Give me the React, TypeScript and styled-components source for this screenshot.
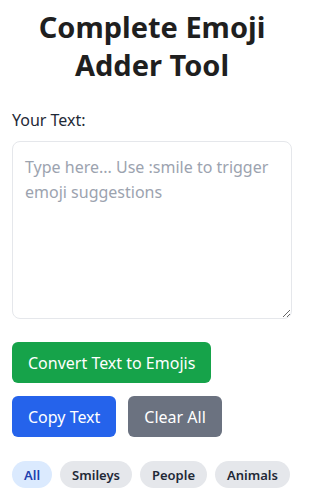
import React, { useState } from 'react';
import styled, { createGlobalStyle } from 'styled-components';

// ─── Global ───────────────────────────────────────────────────────────────────
const GlobalStyle = createGlobalStyle`
  html, body {
    margin: 0;
    padding: 0;
    background: #ffffff;
  }
  body {
    font-family: 'Noto Sans', 'Open Sans', sans-serif;
    color: #1f2937;
  }
  * { box-sizing: border-box; }
`;

// ─── Styles ───────────────────────────────────────────────────────────────────
const Page = styled.main`
  width: 280px;
  margin-left: 12px;
  padding-top: 8px;
  display: flex;
  flex-direction: column;
`;

const Title = styled.h1`
  margin: 0;
  text-align: center;
  font-size: 29px;
  line-height: 38px;
  font-weight: 700;
  color: #1f1f1f;
`;

const Label = styled.label`
  margin-top: 25px;
  font-size: 16px;
  line-height: 22px;
  color: #1f2937;
`;

const TextArea = styled.textarea`
  margin-top: 10px;
  width: 280px;
  height: 178px;
  padding: 13px 12px;
  border: 1px solid #e5e7eb;
  border-radius: 8px;
  font-family: inherit;
  font-size: 16px;
  line-height: 25px;
  color: #1f2937;
  resize: both;
  outline: none;

  &::placeholder {
    color: #9ca3af;
  }
`;

const ButtonRow = styled.div<{ $top: number }>`
  display: flex;
  gap: 12px;
  margin-top: ${({ $top }) => $top}px;
`;

const Button = styled.button<{ $bg: string }>`
  height: 41px;
  padding: 0 16px;
  border: none;
  border-radius: 6px;
  background: ${({ $bg }) => $bg};
  color: #ffffff;
  font-family: inherit;
  font-size: 16px;
  cursor: pointer;
`;

const Chips = styled.div`
  display: flex;
  gap: 8px;
  margin-top: 24px;
`;

const Chip = styled.button<{ $active?: boolean }>`
  height: 27px;
  padding: 0 12px;
  border: none;
  border-radius: 999px;
  background: ${({ $active }) => ($active ? '#dbeafe' : '#e5e7eb')};
  color: ${({ $active }) => ($active ? '#1e40af' : '#1f2937')};
  font-family: inherit;
  font-size: 13px;
  font-weight: 600;
  cursor: pointer;
`;

// ─── Component ────────────────────────────────────────────────────────────────
const categories = ['All', 'Smileys', 'People', 'Animals'];

export default function App() {
  const [text, setText] = useState('');
  const [active, setActive] = useState('All');

  return (
    <>
      <GlobalStyle />
      <Page>
        <Title>
          Complete Emoji
          <br />
          Adder Tool
        </Title>
        <Label htmlFor="emoji-input">Your Text:</Label>
        <TextArea
          id="emoji-input"
          value={text}
          onChange={(e) => setText(e.target.value)}
          placeholder="Type here... Use :smile to trigger emoji suggestions"
        />
        <ButtonRow $top={23}>
          <Button $bg="#16a34a">Convert Text to Emojis</Button>
        </ButtonRow>
        <ButtonRow $top={13}>
          <Button $bg="#2563eb">Copy Text</Button>
          <Button $bg="#6b7280" onClick={() => setText('')}>
            Clear All
          </Button>
        </ButtonRow>
        <Chips>
          {categories.map((c) => (
            <Chip key={c} $active={c === active} onClick={() => setActive(c)}>
              {c}
            </Chip>
          ))}
        </Chips>
      </Page>
    </>
  );
}
